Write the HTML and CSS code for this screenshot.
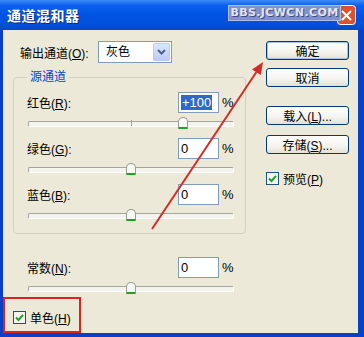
FILE: index.html
```html
<!DOCTYPE html>
<html lang="zh-CN">
<head>
    <meta charset="UTF-8">
    <title>通道混和器</title>
    <link rel="stylesheet" href="styles.css">
</head>
<body>
    <div class="window">
        <div class="titlebar">
            <span class="title">通道混和器</span>
            <span class="close">
                <svg width="19" height="20" viewBox="0 0 19 20">
                    <rect x="0.5" y="0.5" width="18" height="19" rx="3" fill="#e0502a" stroke="#fff"/>
                    <path d="M5 6 L14 15 M14 6 L5 15" stroke="#fff" stroke-width="2"/>
                </svg>
            </span>
            <span class="watermark">BBS.JCWCN.COM</span>
        </div>

        <div class="content">
            <div class="left">
                <div class="output-row">
                    <label>输出通道(<u>O</u>):</label>
                    <div class="select">
                        <span class="select-text">灰色</span>
                        <span class="drop">
                            <svg width="9" height="6" viewBox="0 0 9 6"><path d="M1 1 L4.5 4.5 L8 1" fill="none" stroke="#4d6185" stroke-width="2"/></svg>
                        </span>
                    </div>
                </div>

                <fieldset class="group">
                    <legend>源通道</legend>
                    <div class="field">
                        <label>红色(<u>R</u>):</label>
                        <span class="num"><span class="sel">+100</span></span>
                        <span class="pct">%</span>
                    </div>
                    <div class="slider"><span class="tick"></span><span class="thumb" style="left: 75%"></span></div>

                    <div class="field">
                        <label>绿色(<u>G</u>):</label>
                        <span class="num">0</span>
                        <span class="pct">%</span>
                    </div>
                    <div class="slider"><span class="tick"></span><span class="thumb" style="left: 50%"></span></div>

                    <div class="field">
                        <label>蓝色(<u>B</u>):</label>
                        <span class="num">0</span>
                        <span class="pct">%</span>
                    </div>
                    <div class="slider last"><span class="tick"></span><span class="thumb" style="left: 50%"></span></div>
                </fieldset>

                <div class="constant">
                    <div class="field">
                        <label>常数(<u>N</u>):</label>
                        <span class="num">0</span>
                        <span class="pct">%</span>
                    </div>
                    <div class="slider last"><span class="tick"></span><span class="thumb" style="left: 50%"></span></div>
                </div>

                <div class="mono">
                    <span class="check">
                        <svg width="13" height="13" viewBox="0 0 13 13">
                            <rect x="0.5" y="0.5" width="12" height="12" fill="#f4f4f0" stroke="#1c5180"/>
                            <path d="M3 6.5 L5.5 9 L10 3.8" fill="none" stroke="#21a121" stroke-width="2"/>
                        </svg>
                    </span>
                    <span>单色(<u>H</u>)</span>
                </div>
            </div>

            <div class="right">
                <button class="btn default">确定</button>
                <button class="btn">取消</button>
                <button class="btn gap">载入(<u>L</u>)...</button>
                <button class="btn">存储(<u>S</u>)...</button>
                <div class="preview">
                    <span class="check">
                        <svg width="13" height="13" viewBox="0 0 13 13">
                            <rect x="0.5" y="0.5" width="12" height="12" fill="#f4f4f0" stroke="#1c5180"/>
                            <path d="M3 6.5 L5.5 9 L10 3.8" fill="none" stroke="#21a121" stroke-width="2"/>
                        </svg>
                    </span>
                    <span>预览(<u>P</u>)</span>
                </div>
            </div>
        </div>

        <!-- red annotation arrow drawn over the dialog -->
        <svg class="arrow" width="364" height="337" viewBox="0 0 364 337">
            <line x1="152" y1="229" x2="256.4" y2="72" stroke="#d42a2a" stroke-width="2"/>
            <polygon points="263,62 260.8,75 252,69.4" fill="#d42a2a"/>
        </svg>
    </div>
</body>
</html>
```

FILE: styles.css
```css
* {
    box-sizing: border-box;
    margin: 0;
    padding: 0;
}

body {
    font-family: "Liberation Sans", "Noto Sans CJK SC", sans-serif;
    font-size: 12px;
    color: #000;
    background: #fff;
}

u {
    text-decoration: underline;
}

.window {
    position: relative;
    width: 364px;
    height: 337px;
    background: #0a4fd8;
    border-left: 3px solid #0841c8;
    border-right: 6px solid #0841c8;
    border-bottom: 4px solid #0841c8;
    display: flex;
    flex-direction: column;
}

.titlebar {
    position: relative;
    height: 30px;
    margin-left: -3px;
    margin-right: -6px;
    display: flex;
    align-items: center;
    padding-left: 7px;
    background: linear-gradient(#3c8cf5, #0c5ff0 18%, #0054e3 50%, #0050d8 85%, #0a46c0);
}

.title {
    color: #fff;
    font-family: "Noto Sans CJK SC", sans-serif;
    font-weight: bold;
    font-size: 14px;
    letter-spacing: 0.5px;
    text-shadow: 1px 1px 0 #0a2a80;
}

.close {
    display: flex;
    margin-left: auto;
    margin-right: 8px;
}

.watermark {
    position: absolute;
    left: 228px;
    top: 5px;
    width: 113px;
    height: 16px;
    background: #8191c9;
    border: 1px solid #b3bde0;
    color: #e2e5f0;
    font-family: "DejaVu Sans", sans-serif;
    font-weight: bold;
    font-size: 11px;
    line-height: 14px;
    letter-spacing: 0.4px;
    text-align: center;
    text-shadow: 1px 1px 0 #3f4a85;
}

.content {
    flex: 1;
    display: flex;
    background: #ece9d8;
}

.left {
    width: 243px;
}

.output-row {
    display: flex;
    align-items: center;
    height: 22px;
    margin-top: 11px;
    padding-left: 17px;
}

.output-row label {
    width: 78px;
}

.select {
    display: flex;
    width: 74px;
    height: 22px;
    background: #fff;
    border: 1px solid #7f9db9;
    padding: 1px;
}

.select-text {
    flex: 1;
    padding-left: 6px;
    line-height: 18px;
}

.drop {
    width: 17px;
    display: flex;
    align-items: center;
    justify-content: center;
    background: linear-gradient(#dbe6fd, #b9cdf8);
    border: 1px solid #b7caf5;
    border-radius: 2px;
}

.group {
    width: 233px;
    margin: 7px 0 0 10px;
    padding: 8px 0 12px 13px;
    border: 1px solid #d0d0bf;
    border-radius: 4px;
}

.group legend {
    padding: 0 3px;
    color: #0046d5;
    line-height: 14px;
}

.field {
    display: flex;
    align-items: center;
    height: 21px;
}

.field label {
    width: 151px;
}

.num {
    display: flex;
    align-items: center;
    width: 41px;
    height: 21px;
    background: #fff;
    border: 1px solid #7f9db9;
    padding-left: 2px;
    font-size: 13px;
}

.sel {
    background: #316ac5;
    color: #fff;
    line-height: 15px;
    padding: 0 1px;
}

.pct {
    margin-left: 3px;
    font-size: 13px;
}

.slider {
    position: relative;
    width: 206px;
    height: 12px;
    margin: 4px 0 9px 1px;
}

.slider.last {
    margin-bottom: 0;
}

.slider::before {
    content: "";
    position: absolute;
    left: 0;
    right: 0;
    top: 4px;
    height: 4px;
    background: #f4f3ee;
    border: 1px solid;
    border-color: #a6a59b #fff #fff #a6a59b;
    border-radius: 2px;
}

.tick {
    position: absolute;
    left: 103px;
    top: 3px;
    width: 1px;
    height: 6px;
    background: #a6a59b;
}

.thumb {
    position: absolute;
    top: 0;
    width: 10px;
    height: 12px;
    margin-left: -5px;
    background: #f7f7f4;
    border: 1px solid #9a9a90;
    border-bottom: 2px solid #21a121;
    border-radius: 5px 5px 1px 1px;
}

.constant {
    margin-top: 23px;
    padding-left: 24px;
}

.mono {
    display: flex;
    align-items: center;
    gap: 4px;
    width: 78px;
    height: 36px;
    margin-top: 3px;
    padding: 5px 0 0 8px;
    border: 2px solid #d9251d;
    font-size: 12px;
}

.check {
    display: flex;
}

.right {
    display: flex;
    flex-direction: column;
    padding: 11px 0 0 20px;
}

.btn {
    width: 83px;
    height: 19px;
    font: inherit;
    background: linear-gradient(#fff, #f4f3ee 60%, #e3e0d5);
    border: 1px solid #003c74;
    border-radius: 3px;
    margin-bottom: 8px;
}

.btn.default {
    box-shadow: inset 0 0 0 1px #a5c1ec;
}

.btn.gap {
    margin-top: 11px;
    margin-bottom: 10px;
}

.preview {
    display: flex;
    align-items: center;
    gap: 4px;
    margin-top: 8px;
}

.arrow {
    position: absolute;
    left: -3px;
    top: 0;
    pointer-events: none;
}
```
